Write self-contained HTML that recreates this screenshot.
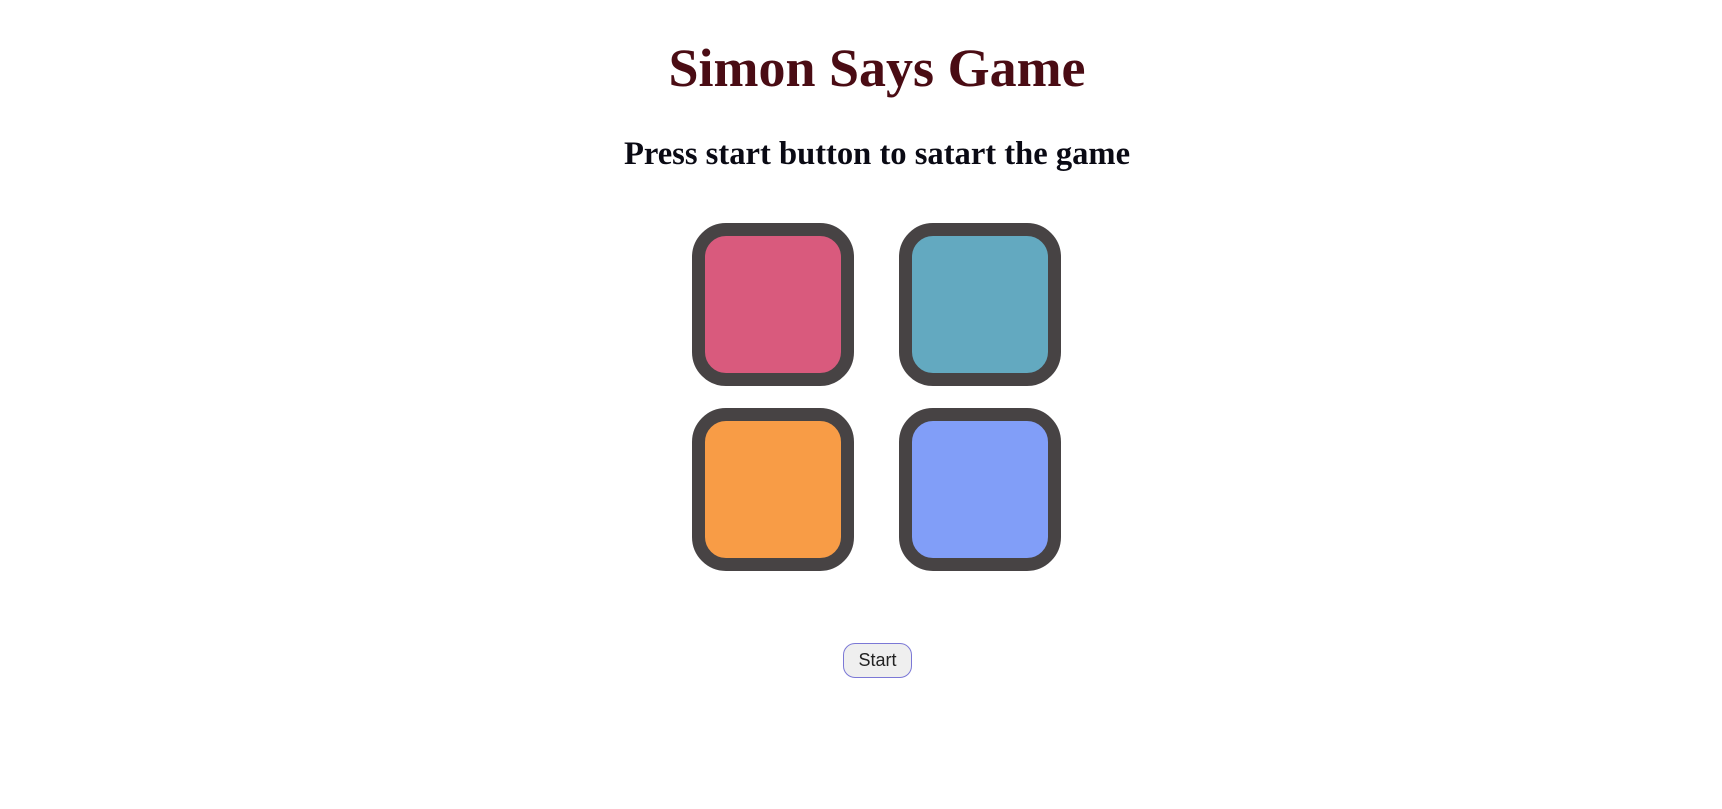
<!DOCTYPE html>
<html><head><meta charset="utf-8"><style>
html,body{margin:0;padding:0;background:#fff;width:1722px;height:809px;overflow:hidden;position:relative}
.t{position:absolute;left:0;width:1754px;text-align:center;font-family:"Liberation Serif",serif;font-weight:bold;white-space:nowrap}
#h1{top:33px;font-size:54px;color:#4a0c14;line-height:70px}
#h2{top:134px;font-size:32.6px;color:#0a0a14;line-height:40px}
.sq{position:absolute;width:136px;height:137px;border:13px solid #474344;border-radius:34px;box-sizing:content-box}
#b{position:absolute;left:843px;top:643px;width:69px;height:35px;box-sizing:border-box;border:1.5px solid #7b78d6;border-radius:12px;background:#efefef;font-family:"Liberation Sans",sans-serif;font-size:18px;color:#222;text-align:center;line-height:32px}
</style></head><body>
<div class="t" id="h1">Simon Says Game</div>
<div class="t" id="h2">Press start button to satart the game</div>
<div class="sq" style="left:692px;top:223px;background:#d95a7d"></div>
<div class="sq" style="left:899px;top:223px;background:#63a9c0"></div>
<div class="sq" style="left:692px;top:408px;background:#f89c46"></div>
<div class="sq" style="left:899px;top:408px;background:#819ef8"></div>
<div id="b">Start</div>
</body></html>
